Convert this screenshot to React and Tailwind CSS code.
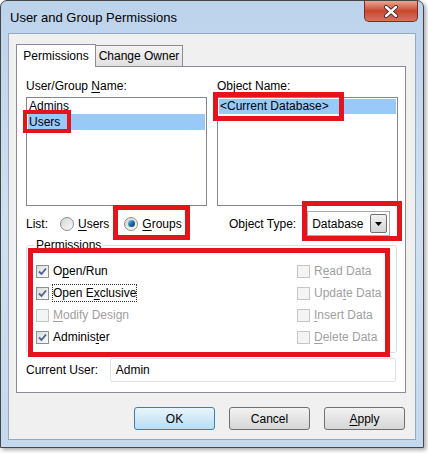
const FONT = { fontFamily: '"Liberation Sans", Arial, sans-serif' };

const LEFT_PERMS = [
  { pre: "O", key: "p", post: "en/Run", checked: true, enabled: true },
  { pre: "Open E", key: "x", post: "clusive", checked: true, enabled: true, focus: true },
  { pre: "", key: "M", post: "odify Design", checked: false, enabled: false },
  { pre: "Adminis", key: "t", post: "er", checked: true, enabled: true },
];

const RIGHT_PERMS = [
  { pre: "R", key: "e", post: "ad Data" },
  { pre: "Upda", key: "t", post: "e Data" },
  { pre: "", key: "I", post: "nsert Data" },
  { pre: "", key: "D", post: "elete Data" },
];

function Mn({ pre, k, post }) {
  return (
    <span className="whitespace-nowrap">
      {pre}
      <span className="underline underline-offset-2">{k}</span>
      {post}
    </span>
  );
}

function Checkbox({ checked, enabled }) {
  return (
    <span
      className={`w-[13px] h-[13px] shrink-0 border flex items-center justify-center ${
        enabled
          ? "border-[#8f8f8f] bg-gradient-to-br from-[#dcdcdc] to-[#fbfbfb]"
          : "border-[#c5c5c5] bg-[#f4f4f4]"
      }`}
    >
      {checked && (
        <svg width="9" height="9" viewBox="0 0 9 9">
          <path d="M1 4.5 L3.5 7 L8 1.5" fill="none" stroke="#4a5f97" strokeWidth="1.8" />
        </svg>
      )}
    </span>
  );
}

function Radio({ selected }) {
  return (
    <span className="w-[14px] h-[14px] shrink-0 rounded-full border border-[#8f8f8f] bg-gradient-to-br from-[#d6d6d6] to-[#fafafa] flex items-center justify-center">
      {selected && (
        <span className="w-[7px] h-[7px] rounded-full bg-gradient-to-br from-[#8fd3f5] via-[#1c6fa8] to-[#0d3f6a]" />
      )}
    </span>
  );
}

function Button({ children, isDefault }) {
  return (
    <button
      className={`w-[81px] h-[23px] rounded-[3px] border text-[12px] text-black ${
        isDefault
          ? "border-[#3c7fb1] bg-gradient-to-b from-[#e9f5fc] to-[#b7def4]"
          : "border-[#707070] bg-gradient-to-b from-[#f2f2f2] to-[#d6d6d6]"
      }`}
    >
      {children}
    </button>
  );
}

function Redbox({ className }) {
  return <div className={`absolute border-[#e3141c] pointer-events-none ${className}`} />;
}

export default function App() {
  return (
    <div className="relative w-[428px] h-[453px] bg-white overflow-hidden text-black" style={FONT}>
      <div className="w-[424px] h-[448px] rounded-t-[7px] border border-[#454545] bg-gradient-to-b from-[#bcd3ec] via-[#cfe0f2] to-[#c4d8ee] shadow-[2px_2px_4px_rgba(0,0,0,0.35)] flex flex-col px-[7px] pb-[7px]">
        {/* title bar */}
        <div className="h-[32px] shrink-0 flex justify-between">
          <div className="pl-[2px] pt-[8px] text-[13px] leading-[18px] text-black">User and Group Permissions</div>
          <div className="mr-[-2px] w-[54px] h-[21px] rounded-b-[5px] border border-t-0 border-[#7a2e22] bg-gradient-to-b from-[#e8a593] via-[#c8452f] to-[#d3755a] flex items-center justify-center">
            <svg width="16" height="13" viewBox="0 0 16 13">
              <path d="M3 2 L13 11 M13 2 L3 11" stroke="#3a1a14" strokeWidth="4" strokeLinecap="round" />
              <path d="M3 2 L13 11 M13 2 L3 11" stroke="#ffffff" strokeWidth="2.4" strokeLinecap="round" />
            </svg>
          </div>
        </div>

        {/* client area */}
        <div className="flex-1 bg-[#f0f0f0] border border-[#98a9bd] flex flex-col pl-[7px] pr-[9px] pt-[9px]">
          {/* tabs */}
          <div className="flex items-end h-[23px] text-[12px]">
            <div className="w-[80px] h-[23px] bg-white border border-b-0 border-[#898c95] flex items-center justify-center relative top-[1px] z-10">
              Permissions
            </div>
            <div className="w-[87px] h-[21px] bg-gradient-to-b from-[#f3f3f3] to-[#e1e1e1] border border-l-0 border-b-0 border-[#898c95] flex items-center justify-center">
              Change Owner
            </div>
          </div>

          {/* tab panel */}
          <div className="w-[390px] h-[327px] bg-white border border-[#898c95] px-[9px] pt-[11px] text-[12px] leading-[16px]">
            <div className="grid grid-cols-[181px_181px] gap-x-[10px]">
              <div>
                User/Group <Mn pre="" k="N" post="ame:" />
              </div>
              <div>Object Name:</div>
              <div className="mt-[3px] h-[109px] border border-[#828790] bg-white p-[1px]">
                <div className="h-[15px] leading-[15px] pl-[1px]">Admins</div>
                <div className="h-[16px] leading-[16px] pl-[1px] bg-[#99c9f9]">Users</div>
              </div>
              <div className="mt-[3px] h-[109px] border border-[#828790] bg-white p-[1px]">
                <div className="h-[15px] leading-[15px] pl-[1px] bg-[#99c9f9]">&lt;Current Database&gt;</div>
              </div>

              {/* list / object type row */}
              <div className="h-[35px] flex items-center">
                <span>List:</span>
                <span className="ml-[12px] flex items-center gap-[4px]">
                  <Radio />
                  <Mn pre="" k="U" post="sers" />
                </span>
                <span className="ml-[15px] flex items-center gap-[4px]">
                  <Radio selected />
                  <Mn pre="" k="G" post="roups" />
                </span>
              </div>
              <div className="h-[35px] flex items-center">
                <span className="ml-[12px]">Object Type:</span>
                <div className="ml-[11px] w-[83px] h-[25px] border border-[#abadb3] bg-white flex items-center justify-between pl-[4px] pr-[2px]">
                  <span>Database</span>
                  <span className="w-[17px] h-[19px] border border-[#707070] rounded-[2px] bg-gradient-to-b from-[#f2f2f2] to-[#d4d4d4] flex items-center justify-center">
                    <svg width="7" height="4" viewBox="0 0 7 4">
                      <path d="M0 0 H7 L3.5 4 Z" fill="#000" />
                    </svg>
                  </span>
                </div>
              </div>
            </div>

            {/* permissions group */}
            <div className="relative mt-[4px] w-[371px] h-[108px] border border-[#d5dfe5] rounded-[3px] pt-[14px] pl-[9px] grid grid-cols-[261px_auto]">
              <span className="absolute left-[7px] top-[-9px] bg-white px-[2px]">Permissions</span>
              <div className="flex flex-col">
                {LEFT_PERMS.map((p) => (
                  <div key={p.post} className="h-[22px] flex items-center gap-[4px]">
                    <Checkbox checked={p.checked} enabled={p.enabled} />
                    <span
                      className={`${p.enabled ? "text-black" : "text-[#a0a0a0]"} ${
                        p.focus ? "outline outline-1 outline-dotted outline-[#333]" : ""
                      }`}
                    >
                      <Mn pre={p.pre} k={p.key} post={p.post} />
                    </span>
                  </div>
                ))}
              </div>
              <div className="flex flex-col">
                {RIGHT_PERMS.map((p) => (
                  <div key={p.post} className="h-[22px] flex items-center gap-[4px] text-[#a0a0a0]">
                    <Checkbox checked={false} enabled={false} />
                    <Mn pre={p.pre} k={p.key} post={p.post} />
                  </div>
                ))}
              </div>
            </div>

            {/* current user */}
            <div className="mt-[5px] flex items-center">
              <span className="w-[84px]">Current User:</span>
              <div className="w-[287px] h-[24px] border border-[#dfe3e8] rounded-[2px] bg-white flex items-center pl-[5px]">
                Admin
              </div>
            </div>
          </div>

          {/* buttons */}
          <div className="mt-[14px] flex justify-end gap-[14px] pr-[1px]">
            <Button isDefault>OK</Button>
            <Button>Cancel</Button>
            <Button>
              <Mn pre="" k="A" post="pply" />
            </Button>
          </div>
        </div>
      </div>

      {/* annotation boxes */}
      <Redbox className="left-[23px] top-[110px] w-[48px] h-[23px] border-[4px]" />
      <Redbox className="left-[213px] top-[92px] w-[131px] h-[29px] border-[5px]" />
      <Redbox className="left-[113px] top-[205px] w-[77px] h-[35px] border-[5px]" />
      <Redbox className="left-[302px] top-[201px] w-[100px] h-[40px] border-[5px]" />
      <Redbox className="left-[28px] top-[248px] w-[362px] h-[109px] border-[5px]" />
    </div>
  );
}
